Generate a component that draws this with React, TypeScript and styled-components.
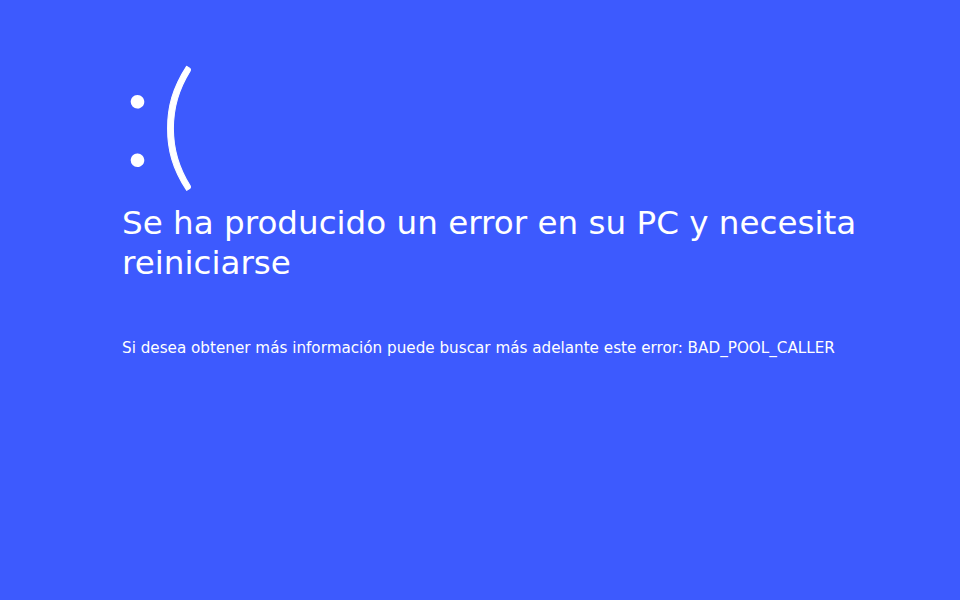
import React from 'react';
import styled, { createGlobalStyle } from 'styled-components';

const GlobalStyle = createGlobalStyle`
    html, body {
        margin: 0;
        padding: 0;
        background: #3d5afe;
    }
`;

const Screen = styled.main`
    background: #3d5afe;
    box-sizing: border-box;
    color: #ffffff;
    display: flex;
    flex-direction: column;
    font-family: 'DejaVu Sans', Verdana, sans-serif;
    height: 600px;
    padding: 37px 0 0 120px;
    width: 960px;
`;

const Face = styled.div`
    align-items: flex-start;
    display: flex;
    font-family: 'Lato', 'Open Sans', sans-serif;
    font-weight: 300;
`;

const Eyes = styled.span`
    font-size: 146px;
    line-height: 146px;
`;

const Mouth = styled.span`
    font-size: 138px;
    line-height: 138px;
    margin: 13px 0 0 5px;
    -webkit-text-stroke: 1px #ffffff;
`;

const Title = styled.h1`
    font-size: 32.6px;
    font-weight: normal;
    line-height: 40px;
    margin: 15px 0 0 2px;
    max-width: 780px;
`;

const Details = styled.p`
    font-size: 15.2px;
    line-height: 18px;
    margin: 56px 0 0 2px;
`;

const App: React.FC = () => (
    <>
        <GlobalStyle />
        <Screen>
            <Face>
                <Eyes>:</Eyes>
                <Mouth>(</Mouth>
            </Face>
            <Title>Se ha producido un error en su PC y necesita reiniciarse</Title>
            <Details>
                Si desea obtener más información puede buscar más adelante este error: BAD_POOL_CALLER
            </Details>
        </Screen>
    </>
);

export default App;
